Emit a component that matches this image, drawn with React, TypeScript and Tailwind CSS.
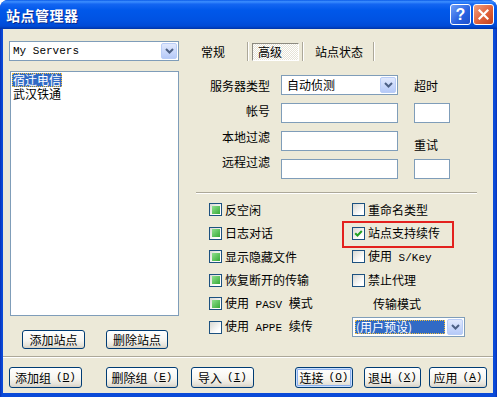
import React from 'react';

const cjk = "font-['Noto_Sans_CJK_SC','Noto_Sans',sans-serif]";

// SimSun-style half-width latin: narrow mono
const Latin: React.FC<{ children: React.ReactNode }> = ({ children }) => (
  <span className="font-['Liberation_Mono',monospace] text-[11px]">{children}</span>
);

const DropButton: React.FC = () => (
  <div className="w-[16px] h-[16px] shrink-0 rounded-[2px] border border-[#b9cdf7] bg-[linear-gradient(180deg,#e1e9fd,#b6caf8)] flex items-center justify-center">
    <svg width="9" height="6" viewBox="0 0 9 6">
      <path d="M1 1 L4.5 4.5 L8 1" fill="none" stroke="#4d6185" strokeWidth="2" />
    </svg>
  </div>
);

const XPButton: React.FC<{ className: string; children: React.ReactNode; isDefault?: boolean }> = ({
  className,
  children,
  isDefault,
}) => (
  <div
    className={`rounded-[3px] border border-[#003c74] bg-[linear-gradient(180deg,#ffffff_0%,#f6f5f0_55%,#e6e3d9_85%,#d6d0c5_100%)] flex items-center justify-center text-[12px] text-black shrink-0 ${
      isDefault ? 'shadow-[inset_0_0_0_1px_#c9defc,inset_0_0_0_2px_#8cb0ee]' : ''
    } ${className}`}
  >
    {children}
  </div>
);

const Key: React.FC<{ k: string }> = ({ k }) => (
  <span className="ml-[5px] font-['Liberation_Mono',monospace] text-[11px]">
    (<u>{k}</u>)
  </span>
);

const Check: React.FC<{ state: 'off' | 'mixed' | 'on' }> = ({ state }) => (
  <div className="w-[13px] h-[13px] shrink-0 border border-[#1c5180] bg-[linear-gradient(135deg,#d8d8d2,#ffffff_75%)] flex items-center justify-center">
    {state === 'mixed' && <div className="w-[8px] h-[8px] bg-[linear-gradient(135deg,#8ee08e,#37aa37)]" />}
    {state === 'on' && (
      <svg width="9" height="9" viewBox="0 0 9 9">
        <path d="M1.2 4.2 L3.5 6.5 L7.8 2" fill="none" stroke="#21a121" strokeWidth="2" />
      </svg>
    )}
  </div>
);

const TabSep: React.FC<{ className: string }> = ({ className }) => (
  <div className={`w-[2px] h-[19px] border-l border-[#aca899] border-r border-r-white ${className}`} />
);

const TitleBar: React.FC = () => (
  <div className="h-[29px] shrink-0 flex items-center bg-[linear-gradient(180deg,#0a5ae8_0%,#3d8fff_6%,#1466f2_14%,#0058ea_35%,#0052e2_70%,#004ad6_90%,#0034a8_100%)]">
    <span className="ml-[6px] text-[14px] font-bold text-white tracking-[0.5px] [text-shadow:1px_1px_0_#0b2a8c]">
      站点管理器
    </span>
    <div className="ml-auto mr-[3px] flex gap-[2px]">
      <div className="w-[21px] h-[21px] rounded-[3px] border border-white bg-[linear-gradient(135deg,#6fa0f8,#2660e0_60%,#1d4fcb)] flex items-center justify-center">
        <span className="text-white text-[16px] font-bold font-['Liberation_Sans',sans-serif] leading-none">?</span>
      </div>
      <div className="w-[21px] h-[21px] rounded-[3px] border border-white bg-[linear-gradient(135deg,#f0a080,#e0613a_55%,#c2421e)] flex items-center justify-center">
        <svg width="11" height="11" viewBox="0 0 11 11">
          <path d="M1.5 1.5 L9.5 9.5 M9.5 1.5 L1.5 9.5" stroke="white" strokeWidth="2.2" strokeLinecap="square" />
        </svg>
      </div>
    </div>
  </div>
);

const LeftPane: React.FC = () => (
  <div className="w-[184px] shrink-0 pl-[6px] pt-[12px] flex flex-col">
    <div className="w-[170px] h-[20px] border border-[#7f9db9] bg-white flex items-center pl-[3px] pr-[1px]">
      <span className="font-['Liberation_Mono',monospace] text-[11px] flex-1">My Servers</span>
      <DropButton />
    </div>
    <div className="mt-[10px] ml-[1px] w-[169px] h-[245px] border border-[#7f9db9] bg-white p-[1px] flex flex-col items-start">
      <div className="h-[14px] leading-[14px] px-[1px] bg-[#316ac5] text-white outline-1 outline-dotted outline-offset-[-1px] outline-[#f0c040]">
        宿迁电信
      </div>
      <div className="h-[14px] leading-[14px] px-[1px]">武汉铁通</div>
    </div>
    <div className="mt-[14px] flex">
      <XPButton className="ml-[13px] w-[63px] h-[19px]">添加站点</XPButton>
      <XPButton className="ml-[21px] w-[62px] h-[19px]">删除站点</XPButton>
    </div>
  </div>
);

const RightPane: React.FC = () => (
  <div className="flex-1 flex flex-col">
    {/* Flat-button tabs */}
    <div className="mt-[13px] h-[19px] flex items-center">
      <span className="ml-[14px]">常规</span>
      <TabSep className="ml-[22px]" />
      <div className="ml-[3px] w-[47px] h-[18px] border border-t-[#8c8a80] border-l-[#8c8a80] border-r-white border-b-white bg-[image:repeating-conic-gradient(#ffffff_0_25%,#e6e3d6_0_50%)] bg-size-[2px_2px] flex items-center pl-[5px] pt-[1px]">
        高级
      </div>
      <TabSep className="ml-[3px]" />
      <span className="ml-[11px]">站点状态</span>
      <TabSep className="ml-[10px]" />
    </div>

    {/* Server fields */}
    <div className="mt-[14px] grid grid-cols-[94px_133px_36px] auto-rows-[20px] gap-y-[8px]">
      <div className="text-right pr-[11px] pt-[5px]">服务器类型</div>
      <div className="w-[117px] h-[20px] border border-[#7f9db9] bg-white flex items-center pl-[5px] pr-[1px]">
        <span className="flex-1">自动侦测</span>
        <DropButton />
      </div>
      <div className="pt-[5px]">超时</div>

      <div className="text-right pr-[11px] pt-[2px]">帐号</div>
      <div className="w-[117px] h-[20px] border border-[#7f9db9] bg-white" />
      <div className="w-[36px] h-[20px] border border-[#7f9db9] bg-white" />

      <div className="text-right pr-[11px]">本地过滤</div>
      <div className="w-[117px] h-[20px] border border-[#7f9db9] bg-white" />
      <div className="pt-[8px]">重试</div>

      <div className="text-right pr-[11px] -mt-[3px]">远程过滤</div>
      <div className="w-[117px] h-[20px] border border-[#7f9db9] bg-white" />
      <div className="w-[36px] h-[20px] border border-[#7f9db9] bg-white" />
    </div>

    <div className="mt-[13px] ml-[9px] w-[281px] h-[2px] border-t border-[#aca899] border-b border-b-white" />

    {/* Options */}
    <div className="mt-[4px] ml-[22px] grid grid-cols-[143px_1fr] auto-rows-[23.5px]">
      <div className="flex items-center gap-[3px]">
        <Check state="mixed" />
        <span>反空闲</span>
      </div>
      <div className="flex items-center gap-[3px]">
        <Check state="off" />
        <span>重命名类型</span>
      </div>

      <div className="flex items-center gap-[3px]">
        <Check state="mixed" />
        <span>日志对话</span>
      </div>
      <div className="relative flex items-center gap-[3px]">
        <Check state="on" />
        <span>站点支持续传</span>
        <div className="absolute left-[-10px] top-[-1px] w-[112px] h-[27px] border-2 border-[#e3211e]" />
      </div>

      <div className="flex items-center gap-[3px]">
        <Check state="mixed" />
        <span>显示隐藏文件</span>
      </div>
      <div className="flex items-center gap-[3px]">
        <Check state="off" />
        <span>
          使用<Latin> S/Key</Latin>
        </span>
      </div>

      <div className="flex items-center gap-[3px]">
        <Check state="mixed" />
        <span>恢复断开的传输</span>
      </div>
      <div className="flex items-center gap-[3px]">
        <Check state="off" />
        <span>禁止代理</span>
      </div>

      <div className="flex items-center gap-[3px]">
        <Check state="mixed" />
        <span>
          使用<Latin> PASV </Latin>模式
        </span>
      </div>
      <div className="flex items-center pl-[21px]">传输模式</div>

      <div className="flex items-center gap-[3px]">
        <Check state="off" />
        <span>
          使用<Latin> APPE </Latin>续传
        </span>
      </div>
      <div className="flex items-center">
        <div className="w-[113px] h-[20px] border border-[#7f9db9] bg-white flex items-center pl-[2px] pr-[1px] gap-[2px]">
          <span className="flex-1 h-[14px] bg-[#316ac5] text-white outline-1 outline-dotted outline-offset-[-1px] outline-[#f0c040] flex items-center pl-[1px]">
            (用户预设)
          </span>
          <DropButton />
        </div>
      </div>
    </div>
  </div>
);

const BottomRow: React.FC = () => (
  <div className="mt-[9px] flex">
    <XPButton className="ml-[6px] w-[73px] h-[21px]">
      添加组<Key k="D" />
    </XPButton>
    <XPButton className="ml-[24px] w-[72px] h-[21px]">
      删除组<Key k="E" />
    </XPButton>
    <XPButton className="ml-[13px] w-[63px] h-[21px]">
      导入<Key k="I" />
    </XPButton>
    <XPButton className="ml-[41px] w-[58px] h-[21px]" isDefault>
      连接<Key k="O" />
    </XPButton>
    <XPButton className="ml-[11px] w-[57px] h-[21px]">
      退出<Key k="X" />
    </XPButton>
    <XPButton className="ml-[8px] w-[58px] h-[21px]">
      应用<Key k="A" />
    </XPButton>
  </div>
);

export default function App() {
  return (
    <div className={`w-[497px] h-[397px] bg-white ${cjk} text-[12px] text-black leading-none`}>
      <div className="w-full h-full rounded-t-[8px] bg-[linear-gradient(90deg,#0831b8,#0a4ad8_2px,#0a4ad8_calc(100%-2px),#0831b8)] flex flex-col overflow-hidden">
        <TitleBar />
        <div className="flex-1 ml-[3px] mr-[4px] mb-[4px] bg-[#ece9d8] flex flex-col">
          <div className="h-[327px] shrink-0 flex">
            <LeftPane />
            <RightPane />
          </div>
          <div className="h-[2px] shrink-0 border-t border-[#aca899] border-b border-b-white" />
          <BottomRow />
        </div>
      </div>
    </div>
  );
}
